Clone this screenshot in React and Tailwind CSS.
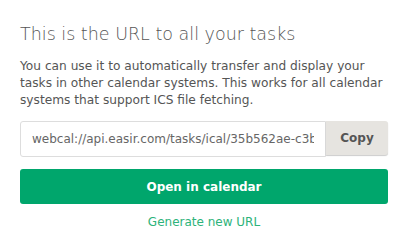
export default function App() {
  return (
    <div className="w-[408px] h-[249px] bg-white px-5 pt-[22px] font-['DejaVu_Sans',sans-serif] text-[#555]">
      <h1 className="text-[17.5px] leading-[24px] font-light">This is the URL to all your tasks</h1>
      <p className="mt-[12px] text-[12.2px] leading-[17px]">
        You can use it to automatically transfer and display your tasks in other calendar systems. This works for all calendar systems that support ICS file fetching.
      </p>
      <div className="mt-[12px] flex">
        <input
          readOnly
          value="webcal://api.easir.com/tasks/ical/35b562ae-c3b1-4e2a"
          className="w-[306px] h-[36px] border border-[#ddd] rounded-l-[3px] px-[11px] text-[12px] text-[#666] outline-none"
        />
        <button className="flex-1 h-[34px] bg-[#e6e4e0] rounded-r-[3px] shadow-[0_1px_1px_rgba(0,0,0,0.2)] text-[12px] font-bold text-[#555]">
          Copy
        </button>
      </div>
      <button className="mt-[12px] w-full h-[35px] bg-[#00a66c] rounded-[3px] text-white text-[12px] font-semibold">
        Open in calendar
      </button>
      <div className="mt-[9px] text-center text-[12px] text-[#2db37a]">Generate new URL</div>
    </div>
  );
}
